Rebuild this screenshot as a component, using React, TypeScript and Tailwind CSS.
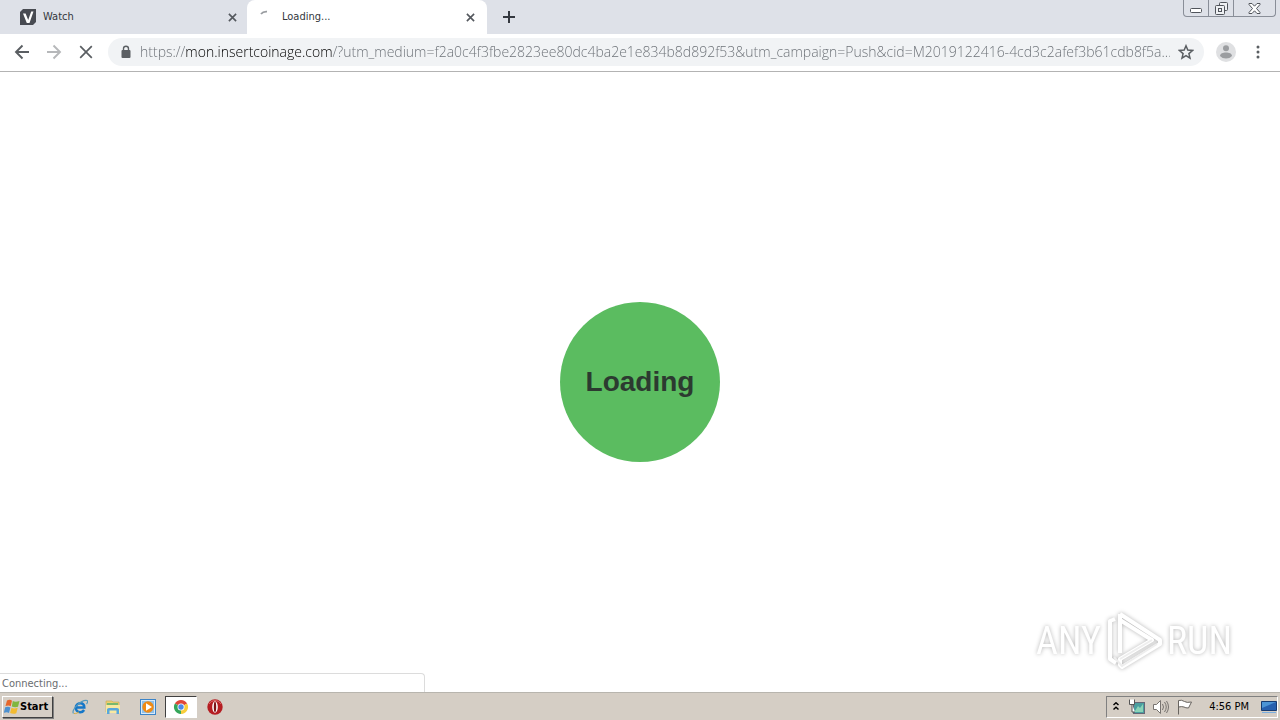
import React from "react";

const ADDRESS =
  "https://mon.insertcoinage.com/?utm_medium=f2a0c4f3fbe2823ee80dc4ba2e1e834b8d892f53&utm_campaign=Push&cid=M2019122416-4cd3c2afef3b61cdb8f5a...";

function CrossIcon({ className }: { className: string }) {
  return (
    <svg viewBox="0 0 10 10" className={className} fill="none" stroke="currentColor" strokeWidth="1.8">
      <path d="M1 1l8 8M9 1L1 9" />
    </svg>
  );
}

function TabStrip() {
  return (
    <header className="flex h-[34px] items-start bg-[#dee1e8]">
      <div role="tablist" className="flex h-full text-[11px] leading-4 text-[#33373c]">
        <div className="flex h-full w-[247px] items-center pl-5 pr-2.5">
          <button role="tab" aria-selected="false" className="flex flex-1 items-center gap-[7px]">
            <svg viewBox="0 0 16 16" className="h-4 w-4">
              <path d="M3 0h13v13l-3 3H0V3z" fill="#484b52" />
              <path d="M3 4.5h2.6L8.2 11l3-8.5h2.3L9.5 14H6.8z" fill="#fff" />
            </svg>
            <span>Watch</span>
          </button>
          <button aria-label="Close Watch" className="text-[#54585e]">
            <CrossIcon className="h-[9px] w-[9px]" />
          </button>
        </div>
        <div className="flex h-full w-60 items-center rounded-t-lg bg-white pl-3 pr-3">
          <button role="tab" aria-selected="true" className="flex flex-1 items-center gap-[7px]">
            <svg viewBox="0 0 16 16" className="h-4 w-4" fill="none">
              <path d="M2 5Q4 2.3 8 2.6" stroke="#999ca0" strokeWidth="1.8" />
            </svg>
            <span>Loading...</span>
          </button>
          <button aria-label="Close Loading" className="text-[#54585e]">
            <CrossIcon className="h-[9px] w-[9px]" />
          </button>
        </div>
      </div>
      <button aria-label="New tab" className="ml-4 flex h-full items-center text-[#34383f]">
        <svg viewBox="0 0 12 12" className="h-3 w-3" stroke="currentColor" strokeWidth="2">
          <path d="M6 0v12M0 6h12" />
        </svg>
      </button>
      <div className="ml-auto mr-1 flex h-[17px] w-[93px] divide-x divide-[#898e98] rounded-b border border-t-0 border-[#898e98] text-[#50545b]">
        <button aria-label="Minimize" className="flex w-[25px] items-end justify-center pb-[3px]">
          <svg viewBox="0 0 12 5" className="h-[5px] w-3">
            <rect x=".5" y=".5" width="11" height="4" rx="1" fill="#fff" stroke="currentColor" />
          </svg>
        </button>
        <button aria-label="Restore" className="flex w-[25px] items-center justify-center">
          <svg viewBox="0 0 13 13" className="h-[13px] w-[13px]" fill="#eef0f3" stroke="currentColor">
            <rect x="4.500" y=".5" width="8" height="8" rx="1" />
            <rect x=".5" y="3.500" width="9" height="9" rx="1" />
            <rect x="3.500" y="6.500" width="3" height="3" />
          </svg>
        </button>
        <button aria-label="Close window" className="flex flex-1 items-center justify-center">
          <svg viewBox="0 0 13 11" className="h-[11px] w-[13px]" fill="#fff" stroke="currentColor">
            <path d="M1 .5h3l2.500 2.700L9 .5h3v1L8.500 5.500l3.500 4v1H9L6.500 7.800 4 10.500H1v-1l3.500-4L1 1.500z" />
          </svg>
        </button>
      </div>
    </header>
  );
}

function Toolbar() {
  return (
    <nav className="flex h-[38px] items-center border-b border-[#b3b3b3] bg-white pb-px pl-3.5 pr-3.5 text-[#5a5e62]">
      <div className="flex gap-4">
        <button aria-label="Back">
          <svg viewBox="0 0 16 16" className="h-4 w-4" fill="none" stroke="currentColor" strokeWidth="1.900">
            <path d="M15 8H2M8.500 1.500L2 8l6.500 6.500" />
          </svg>
        </button>
        <button aria-label="Forward" className="text-[#b6b8ba]">
          <svg viewBox="0 0 16 16" className="h-4 w-4" fill="none" stroke="currentColor" strokeWidth="1.900">
            <path d="M1 8h13M7.500 1.500L14 8l-6.500 6.500" />
          </svg>
        </button>
        <button aria-label="Stop loading">
          <svg viewBox="0 0 16 16" className="h-4 w-4" fill="none" stroke="currentColor" strokeWidth="1.700">
            <path d="M2.200 2.200l11.600 11.600M13.800 2.200L2.200 13.800" />
          </svg>
        </button>
      </div>
      <div className="ml-3.5 flex h-7 min-w-0 flex-1 items-center rounded-full bg-[#f1f3f5] pl-3 pr-2.5">
        <svg viewBox="0 0 12 14" className="h-3.5 w-3 shrink-0">
          <rect x="1.500" y="5" width="9" height="8" rx="1" fill="#5b5f63" />
          <path d="M3.500 6V3.800a2.500 2.500 0 015 0V6" fill="none" stroke="#5b5f63" strokeWidth="1.400" />
        </svg>
        <input
          aria-label="Address"
          defaultValue={ADDRESS}
          className="ml-2 min-w-0 flex-1 bg-[linear-gradient(90deg,#686d73_46px,#000_46px,#000_192px,#686d73_192px)] bg-clip-text font-['Open_Sans','Noto_Sans',sans-serif] text-[14px] font-light leading-5 text-transparent outline-none"
        />
        <button aria-label="Bookmark this page" className="ml-2 shrink-0">
          <svg viewBox="0 0 16 16" className="h-4 w-4" fill="none" stroke="currentColor" strokeWidth="1.500">
            <path d="M8 1.800l1.800 4.300 4.700.4-3.600 3.100 1.100 4.600L8 11.700l-4 2.500 1.100-4.600L1.500 6.500l4.700-.4z" />
          </svg>
        </button>
      </div>
      <button aria-label="Profile" className="ml-3 shrink-0">
        <svg viewBox="0 0 20 20" className="h-5 w-5">
          <circle cx="10" cy="10" r="10" fill="#dfe0e2" />
          <circle cx="10" cy="6.200" r="3" fill="#9b9da0" />
          <path d="M4 14c0-2.400 3-3.500 6-3.500s6 1.100 6 3.500c-1.500 1.700-3.500 2.500-6 2.500S5.500 15.700 4 14z" fill="#9b9da0" />
        </svg>
      </button>
      <button aria-label="Menu" className="ml-3.5 shrink-0">
        <svg viewBox="0 0 16 16" className="h-4 w-4" fill="currentColor">
          <circle cx="8" cy="3" r="1.500" />
          <circle cx="8" cy="8" r="1.500" />
          <circle cx="8" cy="13" r="1.500" />
        </svg>
      </button>
    </nav>
  );
}

function Watermark() {
  return (
    <div className="absolute bottom-5 right-12 flex items-center gap-1 font-['Roboto_Condensed','Liberation_Sans',sans-serif] text-[38px] leading-none text-white drop-shadow-[0_0_2px_#b4b4b4]">
      <span>ANY</span>
      <svg viewBox="0 0 58 62" className="h-[62px] w-[58px]" fill="none" strokeLinejoin="round">
        <g stroke="#fff" strokeWidth="4">
          <path d="M10 9L5 11v38l6 4" />
          <path d="M15 4v39M15 4l40 26v4L17 57l-2-2v-6l32-19L15 10" />
        </g>
        <path d="M9 47l8 9 35-22M15 49l32-19" stroke="#eeeeee" strokeWidth="2" />
      </svg>
      <span>RUN</span>
    </div>
  );
}

function ExplorerIcon() {
  return (
    <svg viewBox="0 0 16 16" className="h-4 w-4" fill="none">
      <path d="M3.500 8.500h8.800c0-2.500-1.500-4.300-4-4.300-2.700 0-4.500 2-4.500 4.600s1.800 4.400 4.400 4.400c1.800 0 3-.7 3.900-2.200" stroke="#1577c8" strokeWidth="2.500" />
      <path d="M1.500 14.500C-1 11 9 .5 15 1.500c1 .5.500 2.500-.5 3.500" stroke="#5399bd" strokeWidth="1.200" />
      <path d="M2 14.500c2 .5 4-.8 5-1.700" stroke="#d4ae42" />
    </svg>
  );
}

function FolderIcon() {
  return (
    <svg viewBox="0 0 16 16" className="h-4 w-4">
      <path d="M1 2h6l1 1h6v10H1z" fill="#edcf70" stroke="#c6a854" strokeWidth=".6" />
      <path d="M2 4h11v2H2z" fill="#78b86e" />
      <path d="M1 6h14v8H1z" fill="#f8e8a0" />
      <path d="M2 15v-4.500Q2 9 4 9h8q2 0 2 1.500V15h-2.500v-3.500h-7V15z" fill="#58a7dc" />
    </svg>
  );
}

function PlayerIcon() {
  return (
    <svg viewBox="0 0 16 16" className="h-4 w-4">
      <rect x=".5" y=".5" width="15" height="15" fill="#d8eafa" stroke="#3b84c8" />
      <rect x="2" y="2" width="12" height="12" fill="#8fc0e8" />
      <circle cx="8" cy="8" r="5.700" fill="#f08a14" />
      <path d="M6 4.300L12 8l-6 3.700z" fill="#fff" />
    </svg>
  );
}

function ChromeIcon() {
  return (
    <svg viewBox="0 0 16 16" className="h-4 w-4">
      <path d="M8 8L1.900 4.500A7 7 0 0114.100 4.500z" fill="#df4638" />
      <path d="M8 8l6.100-3.500A7 7 0 018 15z" fill="#f8cd3b" />
      <path d="M8 8v7A7 7 0 011.900 4.500z" fill="#35a65a" />
      <circle cx="8" cy="8" r="3.500" fill="#fff" />
      <circle cx="8" cy="8" r="2.700" fill="#4c89e9" />
    </svg>
  );
}

function OperaIcon() {
  return (
    <svg viewBox="0 0 16 16" className="h-4 w-4">
      <circle cx="8" cy="8" r="7.700" fill="#b51d22" />
      <path d="M2 5a7 7 0 0112 0" stroke="#df6b6b" fill="none" />
      <ellipse cx="8" cy="8" rx="2.800" ry="5.800" fill="#fff" />
      <ellipse cx="8" cy="8" rx="1.200" ry="5.200" fill="#7c1316" />
    </svg>
  );
}

function Taskbar() {
  return (
    <footer className="flex h-7 shrink-0 items-center border-t border-[#b8b5ae] bg-[#d5cec5] pl-0.5 pr-0.5 pt-px text-[11px] text-black">
      <button className="flex h-[22px] w-[51px] items-center border border-b-[#404040] border-l-white border-r-[#404040] border-t-white pl-px font-['DejaVu_Sans_Condensed','DejaVu_Sans',sans-serif] font-bold shadow-[1px_1px_0_#808080]">
        <svg viewBox="0 0 16 16" className="h-4 w-4 shrink-0">
          <path d="M3 1.500q3-1.500 5 .2L6.700 7.300q-2-1.500-5.200-.2z" fill="#e6672b" />
          <path d="M8.800 2q2.500 1.500 6.700 0l-1.500 5.800q-3 1-6.200-.3z" fill="#80b63f" />
          <path d="M1.200 8.300q3-1.200 5.200.2L5 14q-2-1.500-5.200-.2z" fill="#4d91d0" />
          <path d="M7.500 8.700q2.500 1.500 6.200 0L12.300 14.300q-3 1.200-6.200-.2z" fill="#f2bb31" />
        </svg>
        Start
      </button>
      <div className="ml-3 flex items-center">
        <button aria-label="Internet Explorer" className="flex w-[34px] justify-center pr-1"><ExplorerIcon /></button>
        <button aria-label="File Explorer" className="flex w-8 justify-center pr-1"><FolderIcon /></button>
        <button aria-label="Media Player" className="flex w-[34px] justify-center"><PlayerIcon /></button>
        <button aria-label="Chrome" className="flex h-[22px] w-8 items-center justify-center border border-l-[#404040] border-t-[#404040] border-b-white border-r-white bg-white"><ChromeIcon /></button>
        <button aria-label="Opera" className="ml-2.5 flex"><OperaIcon /></button>
      </div>
      <div className="ml-auto flex h-[22px] items-center border border-b-white border-l-[#808080] border-r-white border-t-[#808080] pl-1.5">
        <button aria-label="Show hidden icons">
          <svg viewBox="0 0 6 10" className="h-2.5 w-1.5" fill="none" stroke="#000" strokeWidth="1.500">
            <path d="M.5 3L3 .800 5.500 3M.5 7.500L3 5.300l2.500 2.200" />
          </svg>
        </button>
        <button aria-label="Network" className="ml-2.5">
          <svg viewBox="0 0 16 16" className="h-4 w-4">
            <rect x="4.500" y="3.500" width="11" height="11" fill="#4a9e9f" stroke="#667" />
            <path d="M6 12l3-5 2 2 3-4v8H6z" fill="#8bd3b7" />
            <path d="M.5.5v5h5v-5M3 5v8h3" fill="#fff" stroke="#555" />
          </svg>
        </button>
        <button aria-label="Volume" className="ml-2">
          <svg viewBox="0 0 16 16" className="h-4 w-4" fill="none" stroke="#77736f">
            <path d="M.5 5.500h3l4-4v13l-4-4h-3z" fill="#fff" />
            <path d="M9.500 5q2 3 0 6M11.500 3q3.500 5 0 10M13.500 2q4 6 0 12" />
          </svg>
        </button>
        <button aria-label="Action Center" className="ml-2">
          <svg viewBox="0 0 16 16" className="h-4 w-4" fill="#fff" stroke="#68645f">
            <path d="M1.500 15.500V1.500q3-1 6 1 2 1.500 7 .5l-3 6q-3 0-4.500-1-2-.8-5.500 0" />
          </svg>
        </button>
        <time className="ml-4 font-['DejaVu_Sans_Condensed','DejaVu_Sans',sans-serif] text-[11px]">4:56 PM</time>
        <button aria-label="Show desktop" className="ml-3">
          <svg viewBox="0 0 16 14" className="h-3.5 w-4">
            <path d="M.5 1.500h15v9H.5z" fill="#265fae" stroke="#163b71" />
            <path d="M1 2h14L1 8z" fill="#4c94d5" />
            <path d="M1 12.500h14" stroke="#7bafe0" />
          </svg>
        </button>
      </div>
    </footer>
  );
}

export default function App() {
  return (
    <div className="flex min-h-screen flex-col bg-white font-['DejaVu_Sans_Condensed','DejaVu_Sans',sans-serif]">
      <TabStrip />
      <Toolbar />
      <main className="relative flex flex-1 items-center justify-center">
        <div role="status" className="flex h-40 w-40 items-center justify-center rounded-full bg-[#5bbc60] font-['Liberation_Sans',sans-serif] text-[28px] font-bold leading-8 text-[#2c3a30]">
          Loading
        </div>
        <Watermark />
        <div className="absolute bottom-0 left-0 h-[19px] w-[425px] rounded-tr border-r border-t border-[#dcdcdc] bg-white pl-0.5 text-[11px] leading-5 text-[#6a6d70]">
          Connecting...
        </div>
      </main>
      <Taskbar />
    </div>
  );
}
